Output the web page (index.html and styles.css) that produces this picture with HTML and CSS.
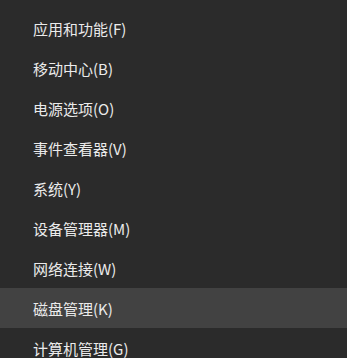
FILE: index.html
```html
<!DOCTYPE html>
<html lang="zh-CN">
<head>
<meta charset="utf-8">
<link rel="stylesheet" href="styles.css">
</head>
<body>
<ul class="menu">
  <li class="item">应用和功能(F)</li>
  <li class="item">移动中心(B)</li>
  <li class="item">电源选项(O)</li>
  <li class="item">事件查看器(V)</li>
  <li class="item">系统(Y)</li>
  <li class="item">设备管理器(M)</li>
  <li class="item">网络连接(W)</li>
  <li class="item active">磁盘管理(K)</li>
  <li class="item">计算机管理(G)</li>
</ul>
</body>
</html>
```
FILE: styles.css
```css
html, body {
  margin: 0;
  padding: 0;
  background: #2b2b2b;
  height: 100%;
  overflow: hidden;
}
.menu {
  list-style: none;
  margin: 0;
  padding: 8px 0 0 0;
  font-family: "Noto Sans CJK SC", "Noto Sans", sans-serif;
  font-size: 15px;
  color: #ebebeb;
}
.item {
  height: 40px;
  line-height: 42px;
  padding-left: 33px;
  white-space: nowrap;
}
.item.active {
  background: #424242;
}
```
